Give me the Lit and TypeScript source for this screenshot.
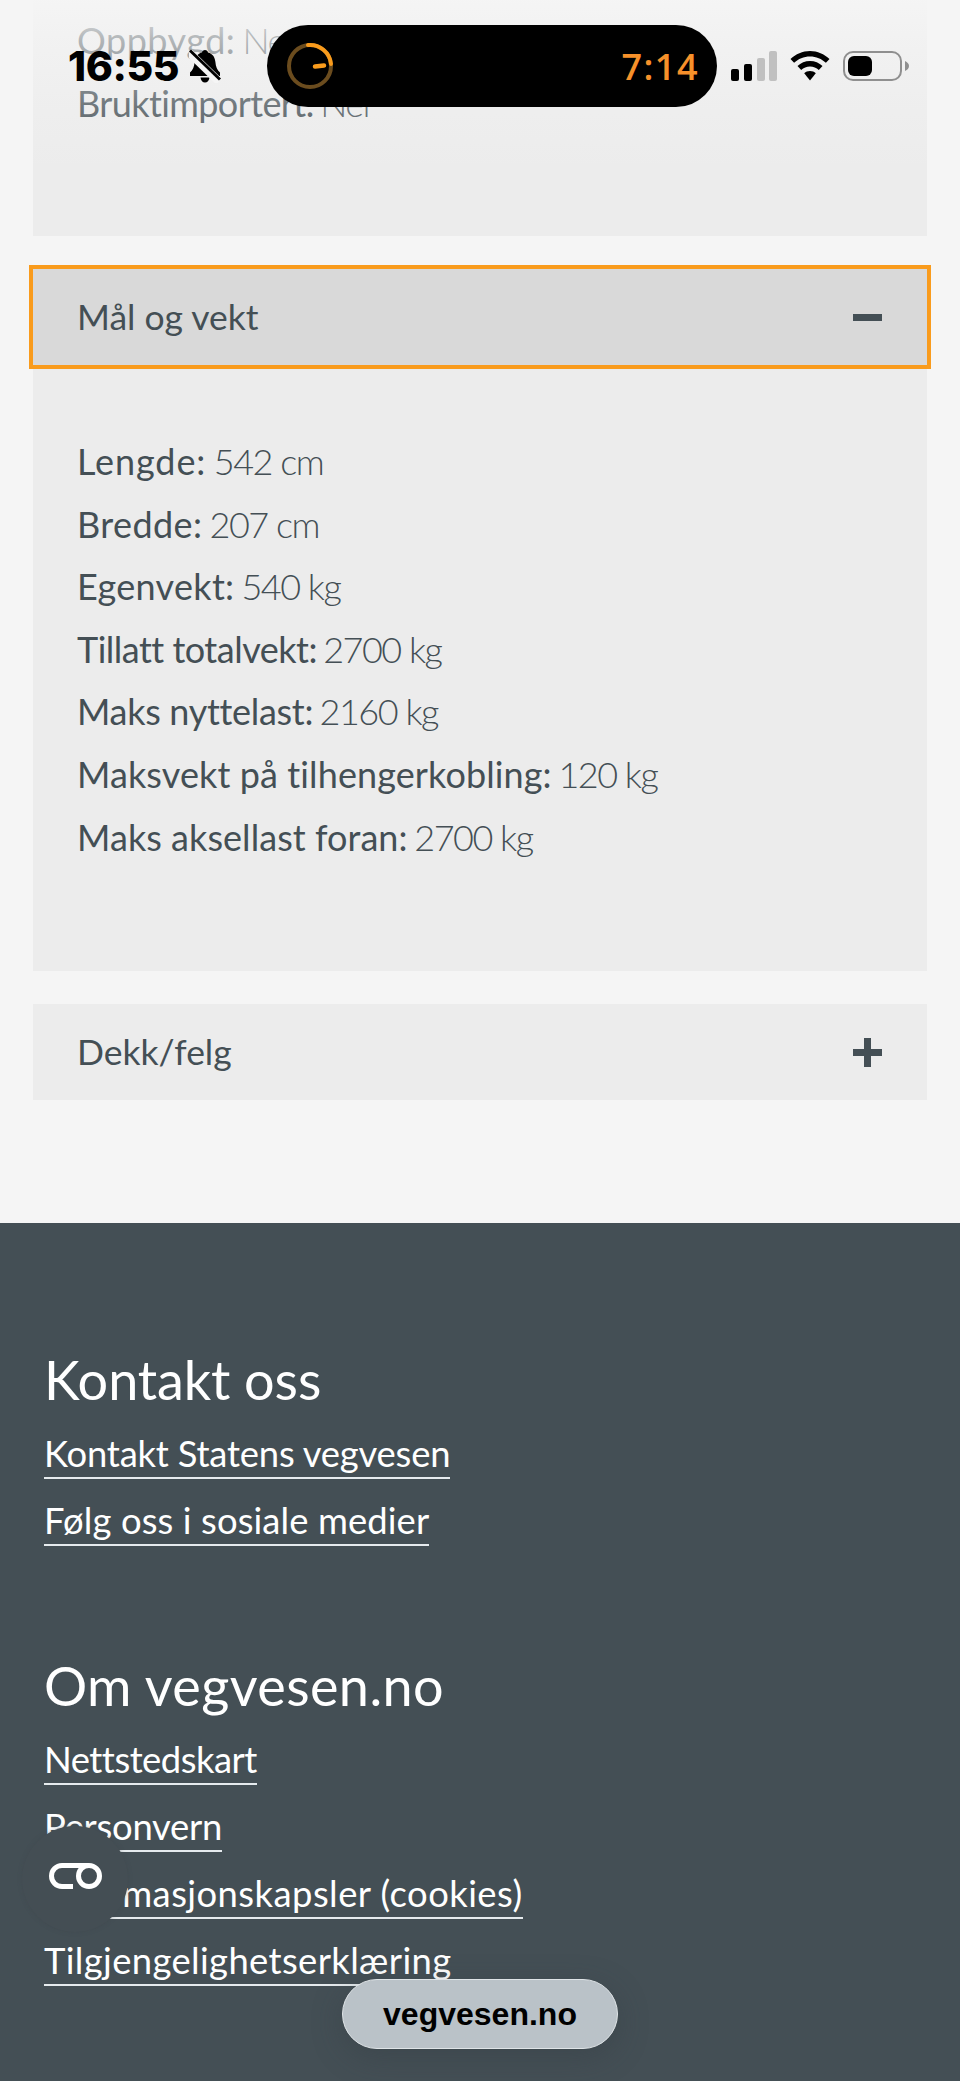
import { html, css, LitElement } from "lit";
import { customElement } from "lit/decorators.js";

// third value: tracking in px, the site's font has other widths than Lato
const MEASURES: [string, string, number][] = [
  ["Lengde:", "542 cm", 0.9],
  ["Bredde:", "207 cm", 0.4],
  ["Egenvekt:", "540 kg", 0.3],
  ["Tillatt totalvekt:", "2700 kg", -0.5],
  ["Maks nyttelast:", "2160 kg", -0.3],
  ["Maksvekt på tilhengerkobling:", "120 kg", 0.1],
  ["Maks aksellast foran:", "2700 kg", 0.05],
];

const FOOTER = [
  {
    title: "Kontakt oss",
    track: -0.1,
    links: [
      { text: "Kontakt Statens vegvesen", track: -0.2 },
      { text: "Følg oss i sosiale medier", track: 0.1 },
    ],
  },
  {
    title: "Om vegvesen.no",
    track: 0.4,
    links: [
      { text: "Nettstedskart", track: -0.5 },
      { text: "Personvern", track: -0.25 },
      { text: "Informasjonskapsler (cookies)", track: 0.45 },
      { text: "Tilgjengelighetserklæring", track: 0.37 },
    ],
  },
];

@customElement("app-root")
export class AppRoot extends LitElement {
  static styles = css`
    :host {
      display: block;
      position: relative;
      height: 2081px;
      overflow: hidden;
      background: #f5f5f5;
      font-family: Lato, "Liberation Sans", sans-serif;
      color: #444f55;
    }

    /* accordion */
    .accordion {
      display: flex;
      flex-direction: column;
      padding: 0 33px;
    }
    .body {
      background: #ececec;
      padding: 9px 44px 0;
    }
    .body.first {
      height: 227px;
      margin-bottom: 33px;
    }
    .body.open {
      height: 606px;
      padding-top: 65px;
      box-sizing: border-box;
      margin-bottom: 33px;
    }
    .row {
      font-size: 36px;
      line-height: 62.6px;
      white-space: nowrap;
    }
    .row span {
      font-weight: 300;
      letter-spacing: -1.5px;
      margin-left: -2.5px;
    }
    .head {
      display: flex;
      align-items: center;
      justify-content: space-between;
      height: 96px;
      padding: 0 45px 0 44px;
      background: #ececec;
      font-size: 35.5px;
    }
    .head.focus {
      position: relative;
      z-index: 1;
      background: #d9d9d9;
      outline: 4px solid #f99b1c;
    }
    .label {
      margin-bottom: 2px;
    }
    .sign {
      position: relative;
      width: 29px;
      height: 29px;
    }
    .sign::before,
    .sign.plus::after {
      content: "";
      position: absolute;
      background: #444f55;
    }
    .sign::before {
      left: 0;
      right: 0;
      top: 11px;
      height: 7px;
    }
    .sign.plus::after {
      top: 0;
      bottom: 0;
      left: 11px;
      width: 7px;
    }

    /* footer */
    footer {
      margin-top: 123px;
      background: #444f55;
      color: #fff;
      padding: 124px 44px 0;
      height: 858px;
      box-sizing: border-box;
    }
    .group {
      display: flex;
      flex-direction: column;
      align-items: flex-start;
      margin-bottom: 107px;
    }
    h2 {
      margin: 0 0 -1px;
      font-size: 54px;
      line-height: 66px;
      font-weight: 400;
    }
    .group a {
      display: block;
      margin-top: 20px;
      height: 45px;
      line-height: 43px;
      font-size: 36.4px;
      color: #fff;
      border-bottom: 2px solid #e6ebee;
      white-space: nowrap;
    }

    /* overlays */
    .fade {
      position: absolute;
      inset: 0 0 auto 0;
      height: 170px;
      background: linear-gradient(
        rgba(245, 245, 245, 0.95) 0,
        rgba(245, 245, 245, 0.62) 40px,
        rgba(245, 245, 245, 0.25) 105px,
        rgba(245, 245, 245, 0) 170px
      );
    }
    .status {
      position: absolute;
      top: 25px;
      left: 68px;
      width: 842px;
      height: 82px;
      display: flex;
      align-items: center;
    }
    .clock {
      width: 122px;
      font-family: Inter, sans-serif;
      font-size: 41px;
      font-weight: 800;
      color: #000;
      letter-spacing: -0.4px;
    }
    .bell {
      margin-left: -1px;
      margin-right: 47px;
    }
    .island {
      width: 450px;
      height: 82px;
      border-radius: 41px;
      background: #000;
      display: flex;
      align-items: center;
      justify-content: space-between;
      padding: 0 18px 0 19px;
      box-sizing: border-box;
      margin-left: -1px;
    }
    .timer {
      font-family: "Open Sans", sans-serif;
      font-size: 36px;
      font-weight: 600;
      color: #f7912a;
      letter-spacing: 1.5px;
    }
    .sys {
      display: flex;
      align-items: center;
      margin-left: 14px;
      gap: 13px;
    }
    .cookie {
      position: absolute;
      left: 22px;
      top: 1826px;
      width: 106px;
      height: 106px;
      border-radius: 50%;
      background: #444e54;
      box-shadow: 0 0 4px rgba(62, 70, 76, 0.4);
      display: flex;
      align-items: center;
      justify-content: center;
    }
    .cookie svg {
      margin-top: -8px;
    }
    .pill {
      position: absolute;
      left: 342px;
      top: 1979px;
      width: 276px;
      height: 70px;
      border-radius: 35px;
      background: #bac2c8;
      border: 1px solid #dfe4e7;
      box-sizing: border-box;
      box-shadow: 0 8px 30px rgba(50, 58, 64, 0.35);
      display: flex;
      align-items: center;
      justify-content: center;
      font-family: "Liberation Sans", sans-serif;
      font-size: 32px;
      font-weight: 700;
      color: #000;
    }
  `;

  renderStatus() {
    return html`
      <div class="fade"></div>
      <div class="status">
        <span class="clock">16:55</span>
        <svg class="bell" width="32" height="34" viewBox="0 0 32 34">
          <path d="M16 1c-1.600 0-2.800 1-3 2.400C8 4.600 6 8.600 5.600 13c-.4 4.500-1.600 8-4.600 10.600V27h30v-3.400C28 21 26.800 17.500 26.400 13 26 8.600 24 4.600 19 3.400 18.800 2 17.600 1 16 1zM11.500 28.500c.3 3 2.200 5 4.500 5s4.200-2 4.500-5z" fill="#000"/>
          <path d="M0 3.500l30 29" stroke="#f5f5f5" stroke-width="8"/>
          <path d="M1 1.500l30 29" stroke="#000" stroke-width="3"/>
        </svg>
        <div class="island">
          <svg width="48" height="48" viewBox="0 0 48 48">
            <circle cx="24" cy="24" r="21" fill="none" stroke="#6b4c1e" stroke-width="4"/>
            <path d="M22 3.100A21 21 0 0 1 45 22" fill="none" stroke="#f99b1c" stroke-width="4" stroke-linecap="round"/>
            <path d="M29 24.500l9-1" stroke="#f99b1c" stroke-width="4.500" stroke-linecap="round"/>
          </svg>
          <span class="timer">7:14</span>
        </div>
        <div class="sys">
          <svg width="46" height="30" viewBox="0 0 46 30">
            <rect x="0" y="18" width="8" height="12" rx="2" fill="#000"/>
            <rect x="13" y="13" width="8" height="17" rx="2" fill="#000"/>
            <rect x="26" y="7" width="8" height="23" rx="2" fill="#c0c0c0"/>
            <rect x="38" y="0" width="8" height="30" rx="2" fill="#c0c0c0"/>
          </svg>
          <svg width="40" height="30" viewBox="0 0 40 30">
            <path d="M20 0C12.500 0 5.800 3 .5 8l3.600 3.800C8.300 7.800 13.800 5.400 20 5.400s11.700 2.400 15.900 6.400L39.500 8C34.200 3 27.500 0 20 0z" fill="#000"/>
            <path d="M20 10c-4.800 0-9.200 1.900-12.500 5l3.700 3.900c2.300-2.200 5.400-3.500 8.800-3.500s6.500 1.300 8.800 3.500l3.700-3.900C29.200 11.900 24.800 10 20 10z" fill="#000"/>
            <path d="M20 20c-2.300 0-4.300.9-5.800 2.300L20 29.500l5.800-7.200C24.300 20.900 22.300 20 20 20z" fill="#000"/>
          </svg>
          <svg width="66" height="30" viewBox="0 0 66 30">
            <rect x="1" y="1" width="57" height="28" rx="9" fill="none" stroke="#8f8f8f" stroke-width="2"/>
            <rect x="5" y="5" width="24" height="20" rx="6" fill="#000"/>
            <path d="M62 10c2.500 1 4 3 4 5s-1.500 4-4 5z" fill="#8f8f8f"/>
          </svg>
        </div>
      </div>
    `;
  }

  render() {
    return html`
      <div class="accordion">
        <div class="body first">
          <div class="row" style="letter-spacing:0.5px">Oppbygd: <span>Nei</span></div>
          <div class="row" style="letter-spacing:-0.6px">Bruktimportert: <span>Nei</span></div>
        </div>
        <div class="head focus"><span class="label">Mål og vekt</span><span class="sign"></span></div>
        <div class="body open">
          ${MEASURES.map(
            ([k, v, t]) => html`<div class="row" style="letter-spacing:${t}px">${k} <span>${v}</span></div>`
          )}
        </div>
        <div class="head"><span class="label">Dekk/felg</span><span class="sign plus"></span></div>
      </div>
      <footer>
        ${FOOTER.map(
          (g) => html`
            <div class="group">
              <h2 style="letter-spacing:${g.track}px">${g.title}</h2>
              ${g.links.map((l) => html`<a style="letter-spacing:${l.track}px">${l.text}</a>`)}
            </div>
          `
        )}
      </footer>
      ${this.renderStatus()}
      <div class="cookie">
        <svg width="58" height="30" viewBox="0 0 58 30">
          <path d="M27 26.500H16a10.500 10.500 0 0 1 0-21H43" fill="none" stroke="#fff" stroke-width="5"/>
          <circle cx="43" cy="16" r="10.500" fill="none" stroke="#fff" stroke-width="5"/>
        </svg>
      </div>
      <div class="pill">vegvesen.no</div>
    `;
  }
}
